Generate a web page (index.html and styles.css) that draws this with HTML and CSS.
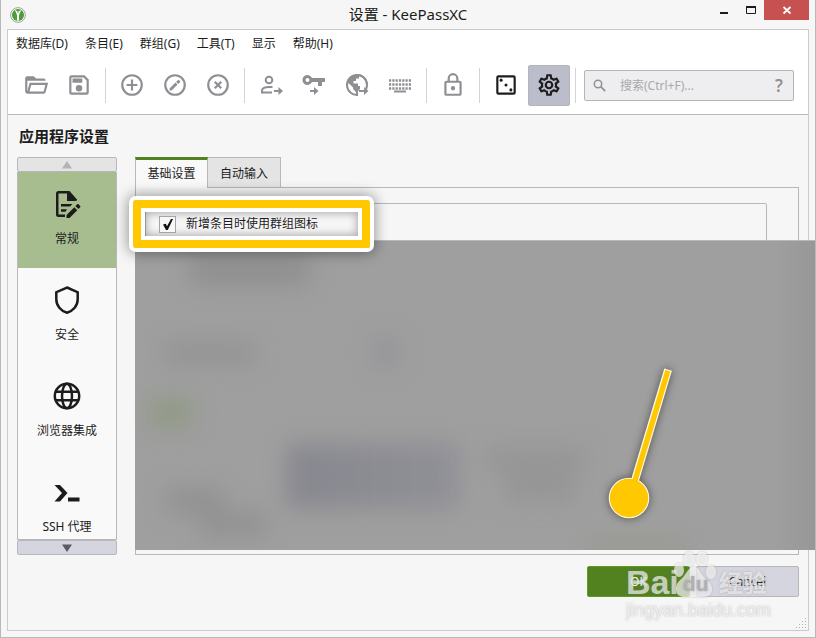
FILE: index.html
```html
<!DOCTYPE html>
<html lang="zh-CN">
<head>
<meta charset="utf-8">
<meta name="viewport" content="width=device-width, initial-scale=1">
<title>设置 - KeePassXC</title>
<link rel="stylesheet" href="styles.css">
</head>
<body>
<div class="window">
  <header class="titlebar">
    <svg class="app-icon" viewBox="0 0 16 16" aria-hidden="true">
      <circle cx="8" cy="8" r="7.4" fill="#f4f4f4" stroke="#a5a5a5"/>
      <circle cx="8" cy="8" r="6" fill="#4d9d38"/>
      <path d="M4.800 2.800L7 8v5.600h2V8l2.200-5.200-2.200 1.400h-2z" fill="#fff"/>
      <circle cx="8" cy="5" r=".8" fill="#4d9d38"/>
    </svg>
    <h1 class="title">设置 - KeePassXC</h1>
    <div class="window-buttons">
      <button class="win-btn" type="button" aria-label="最小化"><svg viewBox="0 0 12 12"><path d="M2 9h8" stroke="#1c1c1c" stroke-width="2"/></svg></button>
      <button class="win-btn" type="button" aria-label="最大化"><svg viewBox="0 0 12 12"><path d="M1.500 2.500h9v7h-9z" fill="none" stroke="#1c1c1c"/><path d="M1 3h10" stroke="#1c1c1c" stroke-width="2"/></svg></button>
      <button class="win-btn close" type="button" aria-label="关闭"><svg viewBox="0 0 12 12"><path d="M2.500 3l7 6.500M9.500 3l-7 6.500" stroke="#fff" stroke-width="1.800"/></svg></button>
    </div>
  </header>

  <div class="frame">
    <nav class="menubar">
      <a href="#">数据库(D)</a>
      <a href="#">条目(E)</a>
      <a href="#">群组(G)</a>
      <a href="#">工具(T)</a>
      <a href="#">显示</a>
      <a href="#">帮助(H)</a>
    </nav>

    <div class="toolbar">
      <button class="tool" type="button" aria-label="打开数据库"><svg viewBox="0 0 24 24"><path d="M6.100 10L4 18V8h17a2 2 0 0 0-2-2h-7l-2-2H4a2 2 0 0 0-2 2v12a2 2 0 0 0 2 2h15c.9 0 1.700-.6 1.900-1.500L23.200 10H6.100M19 18H6l1.600-6h13L19 18z"/></svg></button>
      <button class="tool" type="button" aria-label="保存数据库"><svg viewBox="0 0 24 24"><path d="M17 3H5a2 2 0 0 0-2 2v14a2 2 0 0 0 2 2h14a2 2 0 0 0 2-2V7l-4-4m2 16H5V5h11.170L19 7.830V19m-7-7a3 3 0 1 0 0 6 3 3 0 0 0 0-6M6 6h9v4H6V6z"/></svg></button>
      <span class="separator"></span>
      <button class="tool" type="button" aria-label="新增条目"><svg viewBox="0 0 24 24" class="line"><circle cx="12" cy="12" r="9"/><path d="M12 7v10M7 12h10"/></svg></button>
      <button class="tool" type="button" aria-label="编辑条目"><svg viewBox="0 0 24 24"><circle cx="12" cy="12" r="9" fill="none" stroke="currentColor" stroke-width="2"/><path d="M7 15.200V17h1.900l5.400-5.400-1.900-1.900L7 15.200m9.800-6c.2-.2.2-.5 0-.7l-1.200-1.200c-.2-.2-.5-.2-.7 0l-1.900 1.800 1.900 1.900 1.900-1.800z"/></svg></button>
      <button class="tool" type="button" aria-label="删除条目"><svg viewBox="0 0 24 24" class="line"><circle cx="12" cy="12" r="9"/><path d="M9 9l6 6M15 9l-6 6"/></svg></button>
      <span class="separator"></span>
      <button class="tool" type="button" aria-label="复制用户名"><svg viewBox="0 0 26 26"><circle cx="11" cy="8" r="3.300" fill="none" stroke="currentColor" stroke-width="2"/><path d="M14.500 15h-3.500c-4 0-7 1.500-7 3.500v2h10" fill="none" stroke="currentColor" stroke-width="2"/><path d="M16 18h4.500v-3l4.500 4-4.500 4v-3H16z"/></svg></button>
      <button class="tool" type="button" aria-label="复制密码"><svg viewBox="0 0 26 26"><path fill-rule="evenodd" d="M11 6a5 5 0 1 0 0 4h6v4h4v-4h3V6H11M6.500 6a2 2 0 1 1 0 4 2 2 0 0 1 0-4M9 18h4v-3l4.500 4-4.500 4v-3H9z"/></svg></button>
      <button class="tool" type="button" aria-label="复制网址"><svg viewBox="0 0 26 26"><circle cx="13" cy="13" r="10" fill="none" stroke="currentColor" stroke-width="2" stroke-dasharray="52 100" transform="rotate(84 13 13)"/><path d="M3.500 10l6.500 6.500v-2.500h4v-2.500H9.500V9h2.500V6.500h3V3.500L13 2 7 4.500z"/><path d="M10 14h6v3l-2 2v4l-2 .5v-3.500l-3-3z"/><path d="M15 3a10 10 0 0 1 8 9" fill="none" stroke="currentColor" stroke-width="2"/><path d="M15 18h5v-3l4.500 4-4.500 4v-3h-5z"/></svg></button>
      <button class="tool" type="button" aria-label="执行自动输入"><svg viewBox="0 0 26 26"><path d="M2 8.500h22M2 12.500h22M2 16.500h22" fill="none" stroke="currentColor" stroke-width="2.500" stroke-dasharray="2.200 1.100"/><path d="M7 18.500h12v2H7z"/></svg></button>
      <span class="separator"></span>
      <button class="tool" type="button" aria-label="锁定数据库"><svg viewBox="0 0 24 24" class="line"><rect x="5" y="9" width="14" height="12" rx="1"/><path d="M8 9V6a4 4 0 0 1 8 0v3"/><circle cx="12" cy="15" r="1" fill="currentColor"/></svg></button>
      <span class="separator"></span>
      <button class="tool dark" type="button" aria-label="密码生成器"><svg viewBox="0 0 24 24"><rect x="4" y="4" width="16" height="16" rx="1" fill="none" stroke="currentColor" stroke-width="2"/><circle cx="7.500" cy="7.500" r="1.400"/><circle cx="12" cy="12" r="1.400"/><circle cx="16.500" cy="16.500" r="1.400"/></svg></button>
      <button class="tool dark active" type="button" aria-label="设置"><svg viewBox="0 0 24 24"><path d="M12,8A4,4 0 0,1 16,12A4,4 0 0,1 12,16A4,4 0 0,1 8,12A4,4 0 0,1 12,8M12,10A2,2 0 0,0 10,12A2,2 0 0,0 12,14A2,2 0 0,0 14,12A2,2 0 0,0 12,10M10,22C9.75,22 9.54,21.82 9.5,21.58L9.13,18.93C8.5,18.68 7.96,18.34 7.44,17.94L4.95,18.95C4.73,19.03 4.46,18.95 4.34,18.73L2.34,15.27C2.21,15.05 2.27,14.78 2.46,14.63L4.57,12.97L4.5,12L4.57,11L2.46,9.37C2.27,9.22 2.21,8.95 2.34,8.73L4.34,5.27C4.46,5.05 4.73,4.96 4.95,5.05L7.44,6.05C7.96,5.66 8.5,5.32 9.13,5.07L9.5,2.42C9.54,2.18 9.75,2 10,2H14C14.25,2 14.46,2.18 14.5,2.42L14.87,5.07C15.5,5.32 16.04,5.66 16.56,6.05L19.05,5.05C19.27,4.96 19.54,5.05 19.66,5.27L21.66,8.73C21.79,8.95 21.73,9.22 21.54,9.37L19.43,11L19.5,12L19.43,13L21.54,14.63C21.73,14.78 21.79,15.05 21.66,15.27L19.66,18.73C19.54,18.95 19.27,19.04 19.05,18.95L16.56,17.95C16.04,18.34 15.5,18.68 14.87,18.93L14.5,21.58C14.46,21.82 14.25,22 14,22H10M11.25,4L10.88,6.61C9.68,6.86 8.62,7.5 7.85,8.39L5.44,7.35L4.69,8.65L6.8,10.2C6.4,11.37 6.4,12.64 6.8,13.8L4.68,15.36L5.43,16.66L7.86,15.62C8.63,16.5 9.68,17.14 10.87,17.38L11.24,20H12.76L13.13,17.39C14.32,17.14 15.37,16.5 16.14,15.62L18.57,16.66L19.32,15.36L17.2,13.81C17.6,12.64 17.6,11.37 17.2,10.2L19.31,8.65L18.56,7.35L16.15,8.39C15.38,7.5 14.32,6.86 13.12,6.62L12.75,4H11.25Z"/></svg></button>
      <span class="separator"></span>
      <div class="search">
        <svg viewBox="0 0 16 16" aria-hidden="true"><circle cx="6" cy="6" r="3.700" fill="none" stroke="currentColor" stroke-width="1.500"/><path d="M8.700 8.700l4.500 4.500" stroke="currentColor" stroke-width="1.800"/></svg>
        <input type="text" placeholder="搜索(Ctrl+F)..." aria-label="搜索">
        <button type="button" aria-label="搜索帮助">?</button>
      </div>
    </div>

    <main class="content">
      <h2 class="heading">应用程序设置</h2>
      <div class="settings">
        <nav class="sidebar">
          <button class="scroll up" type="button" aria-label="向上滚动"><svg viewBox="0 0 10 8"><path d="M0 7.500L5 0l5 7.500z"/></svg></button>
          <div class="categories">
            <a class="category selected" href="#"><svg viewBox="0 0 30 30"><path d="M25 11.500V10.500L17.500 2H6.500A2.500 2.500 0 0 0 4 4.500v21A2.500 2.500 0 0 0 6.500 28H13v-2.500H6.500v-21H15V12h8z"/><path d="M9 15h11.500l-2.500 2.400H9zM9 20.300h6l-1.500 2.400H9zM14.500 29v-3l7.800-7.800 3 3-7.800 7.800zM28.200 18.300l-1.800 1.800-3-3 1.800-1.800c.4-.4.9-.4 1.300 0l1.700 1.700c.4.400.4.900 0 1.300z"/></svg><span>常规</span></a>
            <a class="category" href="#"><svg viewBox="0 0 30 30"><path d="M15 2.500l10.700 4.700v7c0 6.500-4.500 11.800-10.700 13.500C8.800 26 4.300 20.700 4.300 14.200v-7z" fill="none" stroke="currentColor" stroke-width="2.500"/></svg><span>安全</span></a>
            <a class="category" href="#"><svg viewBox="0 0 30 30"><g fill="none" stroke="currentColor" stroke-width="2.500"><circle cx="15" cy="15" r="12.200"/><ellipse cx="15" cy="15" rx="5" ry="12.200"/><path d="M4 10.800h22M4 19.200h22"/></g></svg><span>浏览器集成</span></a>
            <a class="category" href="#"><svg viewBox="0 0 30 30"><path d="M2.500 8h5.500L15.500 16 8 24.500H2.500L10 16zM16 20.500h11.500v4H16z"/></svg><span>SSH 代理</span></a>
          </div>
          <button class="scroll down" type="button" aria-label="向下滚动"><svg viewBox="0 0 10 8"><path d="M0 .5h10L5 8z"/></svg></button>
        </nav>

        <section class="panel">
          <div class="tabs" role="tablist">
            <button class="tab current" type="button" role="tab" aria-selected="true">基础设置</button>
            <button class="tab" type="button" role="tab" aria-selected="false">自动输入</button>
          </div>
          <div class="pane">
            <div class="group">
              <label class="option" for="group-icon">
                <span class="highlight"></span>
                <span class="tick">
                  <input type="checkbox" id="group-icon" checked>
                  <svg viewBox="0 0 17 17" aria-hidden="true"><path d="M4 8.500l2.800-.8 1.200 2.500 4-7.200h2L8.800 14H7z" fill="#111"/></svg>
                </span>
                <span class="option-text">新增条目时使用群组图标</span>
              </label>
            </div>
            <div class="cover">
              <svg class="pointer" viewBox="0 0 90 170" aria-hidden="true">
                <g fill="#fff8dc"><path d="M64.300 8.500l7.600 2.300L38 124l-7.600-2.300z"/><circle cx="29" cy="138" r="20.300"/></g>
                <g fill="#ffc800"><path d="M65.300 10l5.100 1.500L36.800 124l-5.200-1.600z"/><circle cx="29" cy="138" r="19.200"/></g>
              </svg>
            </div>
          </div>
        </section>
      </div>

      <div class="actions">
        <button class="action primary" type="button">OK</button>
        <button class="action" type="button">Cancel</button>
        <div class="watermark">
          <div class="brand">
            <span class="bai">Bai</span>
            <span class="paw">
              <svg viewBox="0 0 46 48" aria-hidden="true"><ellipse cx="6" cy="20" rx="5" ry="7"/><ellipse cx="16" cy="9" rx="5.500" ry="7.500"/><ellipse cx="29" cy="9" rx="5.500" ry="7.500"/><ellipse cx="38" cy="22" rx="5" ry="7"/><path d="M21 17c-5 0-7 5-10 9s-8 6-8 13c0 6 4 8 9 8h18c6 0 9-3 9-8 0-6-6-9-9-13s-4-9-9-9z"/></svg>
              <span class="du">du</span>
            </span>
            <span class="jingyan">经验</span>
          </div>
          <span class="site">jingyan.baidu.com</span>
        </div>
      </div>
      <svg class="grip" viewBox="0 0 12 12" aria-hidden="true"><g fill="#b0b0b0"><path d="M10 1h1v1h-1zM7 4h1v1H7zM10 4h1v1h-1zM4 7h1v1H4zM7 7h1v1H7zM10 7h1v1h-1zM1 10h1v1H1zM4 10h1v1H4zM7 10h1v1H7zM10 10h1v1h-1z"/></g></svg>
    </main>
  </div>
</div>
</body>
</html>
```

FILE: styles.css
```css
* {
  box-sizing: border-box;
}

body {
  margin: 0;
  background: #f6f6f6;
  color: #1c1c1c;
  font-family: "Noto Sans", "Noto Sans CJK SC", sans-serif;
  font-size: 12px;
  line-height: 18px;
}

button,
input {
  margin: 0;
  padding: 0;
  border: 0;
  background: none;
  color: inherit;
  font: inherit;
}

a {
  color: inherit;
  text-decoration: none;
}

svg {
  display: block;
  fill: currentColor;
}

.window {
  display: flex;
  flex-direction: column;
  min-height: 100vh;
  padding: 0 6px 6px;
  border: solid #b8b8b8;
  border-width: 0 1px 1px;
  overflow: hidden;
}

/* Title bar */
.titlebar {
  display: grid;
  grid-template-columns: 1fr auto 1fr;
  align-items: center;
  height: 29px;
}

.app-icon {
  width: 16px;
  height: 16px;
  margin-left: 3px;
}

.title {
  margin: 0;
  padding-bottom: 2px;
  font-size: 15px;
  font-weight: 400;
  line-height: 26px;
}

.window-buttons {
  display: flex;
  align-self: start;
  justify-content: flex-end;
}

.win-btn {
  display: flex;
  align-items: center;
  justify-content: center;
  width: 27px;
  height: 20px;
}

.win-btn svg {
  width: 12px;
  height: 12px;
}

.win-btn.close {
  width: 45px;
  background: #c75050;
}

/* Application frame */
.frame {
  display: flex;
  flex: 1;
  flex-direction: column;
  border: 1px solid #cbcbcb;
}

.menubar {
  display: flex;
  gap: 17px;
  padding: 5px 8px;
  background: #fff;
}

.toolbar {
  display: flex;
  align-items: center;
  gap: 1px;
  padding: 7px 14px 8px 7px;
  border-bottom: 1px solid #b8b8b8;
  background: #fff;
}

.tool {
  display: flex;
  flex: none;
  align-items: center;
  justify-content: center;
  width: 42px;
  height: 41px;
  padding-bottom: 1px;
  border: 1px solid transparent;
  border-radius: 2px;
  color: #8e8e93;
}

.tool svg {
  width: 26px;
  height: 26px;
}

.tool .line {
  fill: none;
  stroke: currentColor;
  stroke-width: 2;
}

.tool.dark {
  color: #1d1d20;
}

.tool.active {
  border-color: #b5b5b8;
  background: #bbbdca;
}

.separator {
  flex: none;
  width: 1px;
  height: 35px;
  margin: 0 4px;
  background: #d4d4d4;
}

.search {
  display: flex;
  flex: 1;
  align-items: center;
  min-width: 0;
  height: 31px;
  margin-left: 3px;
  border: 1px solid #b5b5b8;
  border-radius: 2px;
  background: #eeeef0;
  color: #929292;
}

.search svg {
  flex: none;
  width: 16px;
  height: 16px;
  margin: 0 12px 0 7px;
}

.search input {
  flex: 1;
  min-width: 0;
  outline: 0;
}

.search input::placeholder {
  color: #a8a8ad;
  opacity: 1;
}

.search button {
  width: 28px;
  font-size: 17px;
  font-weight: 600;
}

/* Settings */
.content {
  position: relative;
  display: flex;
  flex: 1;
  flex-direction: column;
  padding: 9px 9px 33px;
}

.heading {
  margin: 0 2px 9px;
  font-size: 15px;
  font-weight: 700;
  line-height: 24px;
}

.settings {
  display: grid;
  flex: 1;
  grid-template-columns: 100px 1fr;
  gap: 18px;
  min-height: 398px;
}

.sidebar {
  display: flex;
  flex-direction: column;
}

.scroll {
  display: flex;
  flex: none;
  align-items: center;
  justify-content: center;
  height: 15px;
  border: 1px solid #b8b8b8;
  border-radius: 2px;
}

.scroll svg {
  width: 10px;
  height: 8px;
}

.scroll.up {
  background: #e4e4e4;
  color: #b4b4b8;
}

.scroll.down {
  background: #d5d5df;
  color: #5c5c62;
}

.categories {
  flex: 1 1 0;
  min-height: 0;
  border: solid #b8b8b8;
  border-width: 0 1px 1px;
  background: #f9f9f9;
  overflow: hidden;
}

.category {
  display: flex;
  flex-direction: column;
  align-items: center;
  gap: 11px;
  height: 96px;
  padding-top: 17px;
}

.category svg {
  width: 30px;
  height: 30px;
}

.category.selected {
  background: #a7bd8f;
}

.panel {
  display: flex;
  flex-direction: column;
  min-width: 0;
}

.tabs {
  display: flex;
}

.tab {
  width: 73px;
  height: 30px;
  padding-top: 2px;
  border: solid #b8b8b8;
  border-width: 1px 1px 0 0;
  background: #e4e4e4;
}

.tab.current {
  z-index: 1;
  height: 31px;
  margin-bottom: -1px;
  padding-top: 0;
  border-width: 3px 1px 0;
  border-top-color: #52821f;
  background: #f9f9f9;
}

.pane {
  position: relative;
  display: flex;
  flex: 1;
  padding: 15px 31px 16px 9px;
  border: 1px solid #b8b8b8;
}

.group {
  flex: 1;
  padding: 11px 13px;
  border: 1px solid #b8b8b8;
  border-radius: 2px;
}

.option {
  position: relative;
  z-index: 3;
  display: inline-flex;
  align-items: center;
  gap: 10px;
}

.tick {
  position: relative;
  width: 17px;
  height: 17px;
}

.tick input {
  display: block;
  width: 17px;
  height: 17px;
  border: 1px solid #a5a5a5;
  background: #f8f8f8;
  appearance: none;
}

.tick svg {
  position: absolute;
  inset: 0;
}

.option-text {
  position: relative;
}

/* Annotations lying over the window */
.highlight {
  position: absolute;
  inset: -15px -52px -15px -26px;
  border: 8px solid #ffc800;
  border-radius: 3px;
  box-shadow:
    0 0 0 4px #fff,
    0 0 14px 5px rgba(0, 0, 0, 0.4),
    inset 0 0 0 4px #fff,
    inset 0 0 8px 5px rgba(0, 0, 0, 0.32);
}

.cover {
  position: absolute;
  z-index: 2;
  inset: 52px -17px 4px -1px;
  border-top: 1px solid #b8b8b8;
  background:
    linear-gradient(90deg, transparent 94%, rgba(140, 140, 140, 0.4)),
    #9f9f9f;
  overflow: hidden;
}

/* Blurred remains of the controls behind the cover */
.cover::before {
  position: absolute;
  inset: 0;
  background:
    linear-gradient(#8f8f8f, #8f8f8f) 55px 14px / 120px 30px,
    linear-gradient(#949494, #949494) 30px 100px / 90px 24px,
    linear-gradient(#96969a, #96969a) 235px 96px / 30px 30px,
    linear-gradient(#929a88, #929a88) 14px 156px / 44px 32px,
    linear-gradient(90deg, #87878f, #909097) 152px 203px / 172px 64px,
    linear-gradient(#969696, #969696) 350px 206px / 100px 26px,
    linear-gradient(#969696, #969696) 370px 232px / 70px 30px,
    linear-gradient(#929292, #929292) 32px 246px / 56px 28px,
    linear-gradient(#929292, #929292) 66px 270px / 66px 26px,
    linear-gradient(#84906f, #84906f) 455px 304px / 94px 6px;
  background-repeat: no-repeat;
  content: "";
  filter: blur(11px);
}

.pointer {
  position: absolute;
  right: 125px;
  bottom: 20px;
  width: 90px;
  height: 170px;
  filter: drop-shadow(0 0 4px rgba(0, 0, 0, 0.5));
}

/* Dialog buttons */
.actions {
  position: relative;
  display: flex;
  gap: 6px;
  justify-content: flex-end;
  padding-top: 11px;
}

.action {
  width: 103px;
  height: 31px;
  border: 1px solid #b8b8b8;
  border-radius: 2px;
  background: #d5d5df;
}

.action.primary {
  border-color: #5f9a28;
  background: #52821f;
  color: #fff;
}

.watermark {
  position: absolute;
  z-index: 3;
  top: -5px;
  right: 28px;
  color: rgba(255, 255, 255, 0.65);
  font-family: "Liberation Sans", "Noto Sans CJK SC", sans-serif;
  text-shadow: 0 0 2px rgba(120, 120, 120, 0.5);
  pointer-events: none;
}

.brand {
  display: flex;
  align-items: flex-end;
  height: 48px;
  font-weight: 700;
}

.bai {
  font-size: 34px;
  line-height: 32px;
}

.paw {
  position: relative;
  width: 40px;
}

.paw svg {
  width: 46px;
  height: 48px;
  margin-left: -6px;
  filter: drop-shadow(0 0 1px rgba(120, 120, 120, 0.6));
}

.du {
  position: absolute;
  bottom: 2px;
  left: 4px;
  color: #b0b0b4;
  font-size: 21px;
  line-height: 24px;
}

.jingyan {
  font-size: 24px;
  line-height: 28px;
}

.site {
  display: block;
  font-size: 18px;
  line-height: 24px;
}

.grip {
  position: absolute;
  right: 1px;
  bottom: 1px;
  width: 12px;
  height: 12px;
}
```
